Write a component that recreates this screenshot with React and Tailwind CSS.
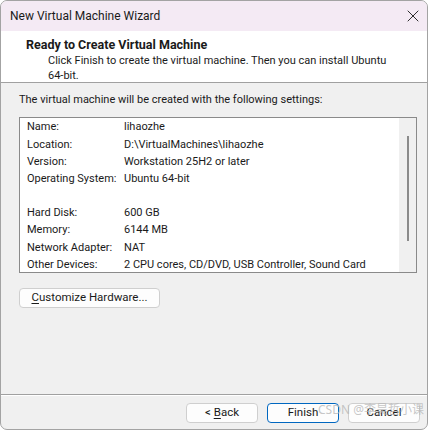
import { X } from "lucide-react";

const rows = [
    ["Name:", "lihaozhe"],
    ["Location:", "D:\\VirtualMachines\\lihaozhe"],
    ["Version:", "Workstation 25H2 or later"],
    ["Operating System:", "Ubuntu 64-bit"],
    ["", ""],
    ["Hard Disk:", "600 GB"],
    ["Memory:", "6144 MB"],
    ["Network Adapter:", "NAT"],
    ["Other Devices:", "2 CPU cores, CD/DVD, USB Controller, Sound Card"],
];

function WizardButton({ children, primary }) {
    return (
        <button
            type="button"
            className={`w-[72px] h-[20px] rounded-[4px] bg-[#fdfdfd] text-[11.5px] leading-none text-[#1a1a1a] border ${
                primary ? "border-[#0067c0]" : "border-[#cfcfcf]"
            }`}
        >
            {children}
        </button>
    );
}

export default function App() {
    return (
        <div className="w-[428px] h-[430px] bg-white font-['Roboto',sans-serif] text-[11px] text-[#1a1a1a]">
            <div className="relative w-full h-full flex flex-col border border-[#a3a3a3] rounded-[7px] overflow-hidden bg-[#f0f0f0]">
                {/* Title bar */}
                <div className="h-[30px] bg-[#f4eaf4] flex items-center justify-between pl-[9px] pr-[4px]">
                    <span className="text-[12px] text-[#1a1a1a]">New Virtual Machine Wizard</span>
                    <X size={20} strokeWidth={1.1} className="text-[#1a1a1a]" />
                </div>

                {/* Header */}
                <div className="h-[52px] bg-white border-b border-[#a0a0a0] pt-[6px] pl-[25px]">
                    <div className="font-bold text-[12.5px] leading-[16px]">Ready to Create Virtual Machine</div>
                    <div className="pl-[22px] w-[370px] leading-[15px]">
                        Click Finish to create the virtual machine. Then you can install Ubuntu 64-bit.
                    </div>
                </div>

                {/* Body */}
                <div className="flex-1 flex flex-col pl-[18px] pr-[10px]">
                    <div className="mt-[9px] leading-[16px]">
                        The virtual machine will be created with the following settings:
                    </div>
                    <div className="mt-[9px] h-[156px] border border-[#8a8a8a] bg-white flex">
                        <div className="flex-1 pl-[7px] pt-[1px]">
                            {rows.map(([label, value], i) => (
                                <div key={i} className="flex h-[17.2px] items-center whitespace-nowrap">
                                    <span className="w-[97px] shrink-0">{label}</span>
                                    <span>{value}</span>
                                </div>
                            ))}
                        </div>
                        <div className="w-[17px] bg-[#f0f0f0] flex justify-center pt-[18px]">
                            <div className="w-[2px] h-[105px] bg-[#8b8b8b]" />
                        </div>
                    </div>
                    <div className="mt-[15px]">
                        <button
                            type="button"
                            className="w-[141px] h-[20px] rounded-[4px] bg-[#fdfdfd] border border-[#cfcfcf] text-[11.5px] leading-none"
                        >
                            <span className="underline underline-offset-2">C</span>ustomize Hardware...
                        </button>
                    </div>
                </div>

                {/* Footer */}
                <div className="h-[35px] border-t border-[#a0a0a0] shadow-[inset_0_1px_0_#ffffff] flex justify-end items-start gap-[9px] pt-[8px] pr-[7px]">
                    <WizardButton>
                        &lt; <span className="underline underline-offset-2">B</span>ack
                    </WizardButton>
                    <WizardButton primary>Finish</WizardButton>
                    <WizardButton>Cancel</WizardButton>
                </div>

                <div className="absolute right-[3px] bottom-[10px] text-[12px] text-[#b8b8b8]/80 font-['Noto_Sans','Noto_Sans_CJK_SC',sans-serif] pointer-events-none">
                    CSDN @李昊哲小课
                </div>
            </div>
        </div>
    );
}
